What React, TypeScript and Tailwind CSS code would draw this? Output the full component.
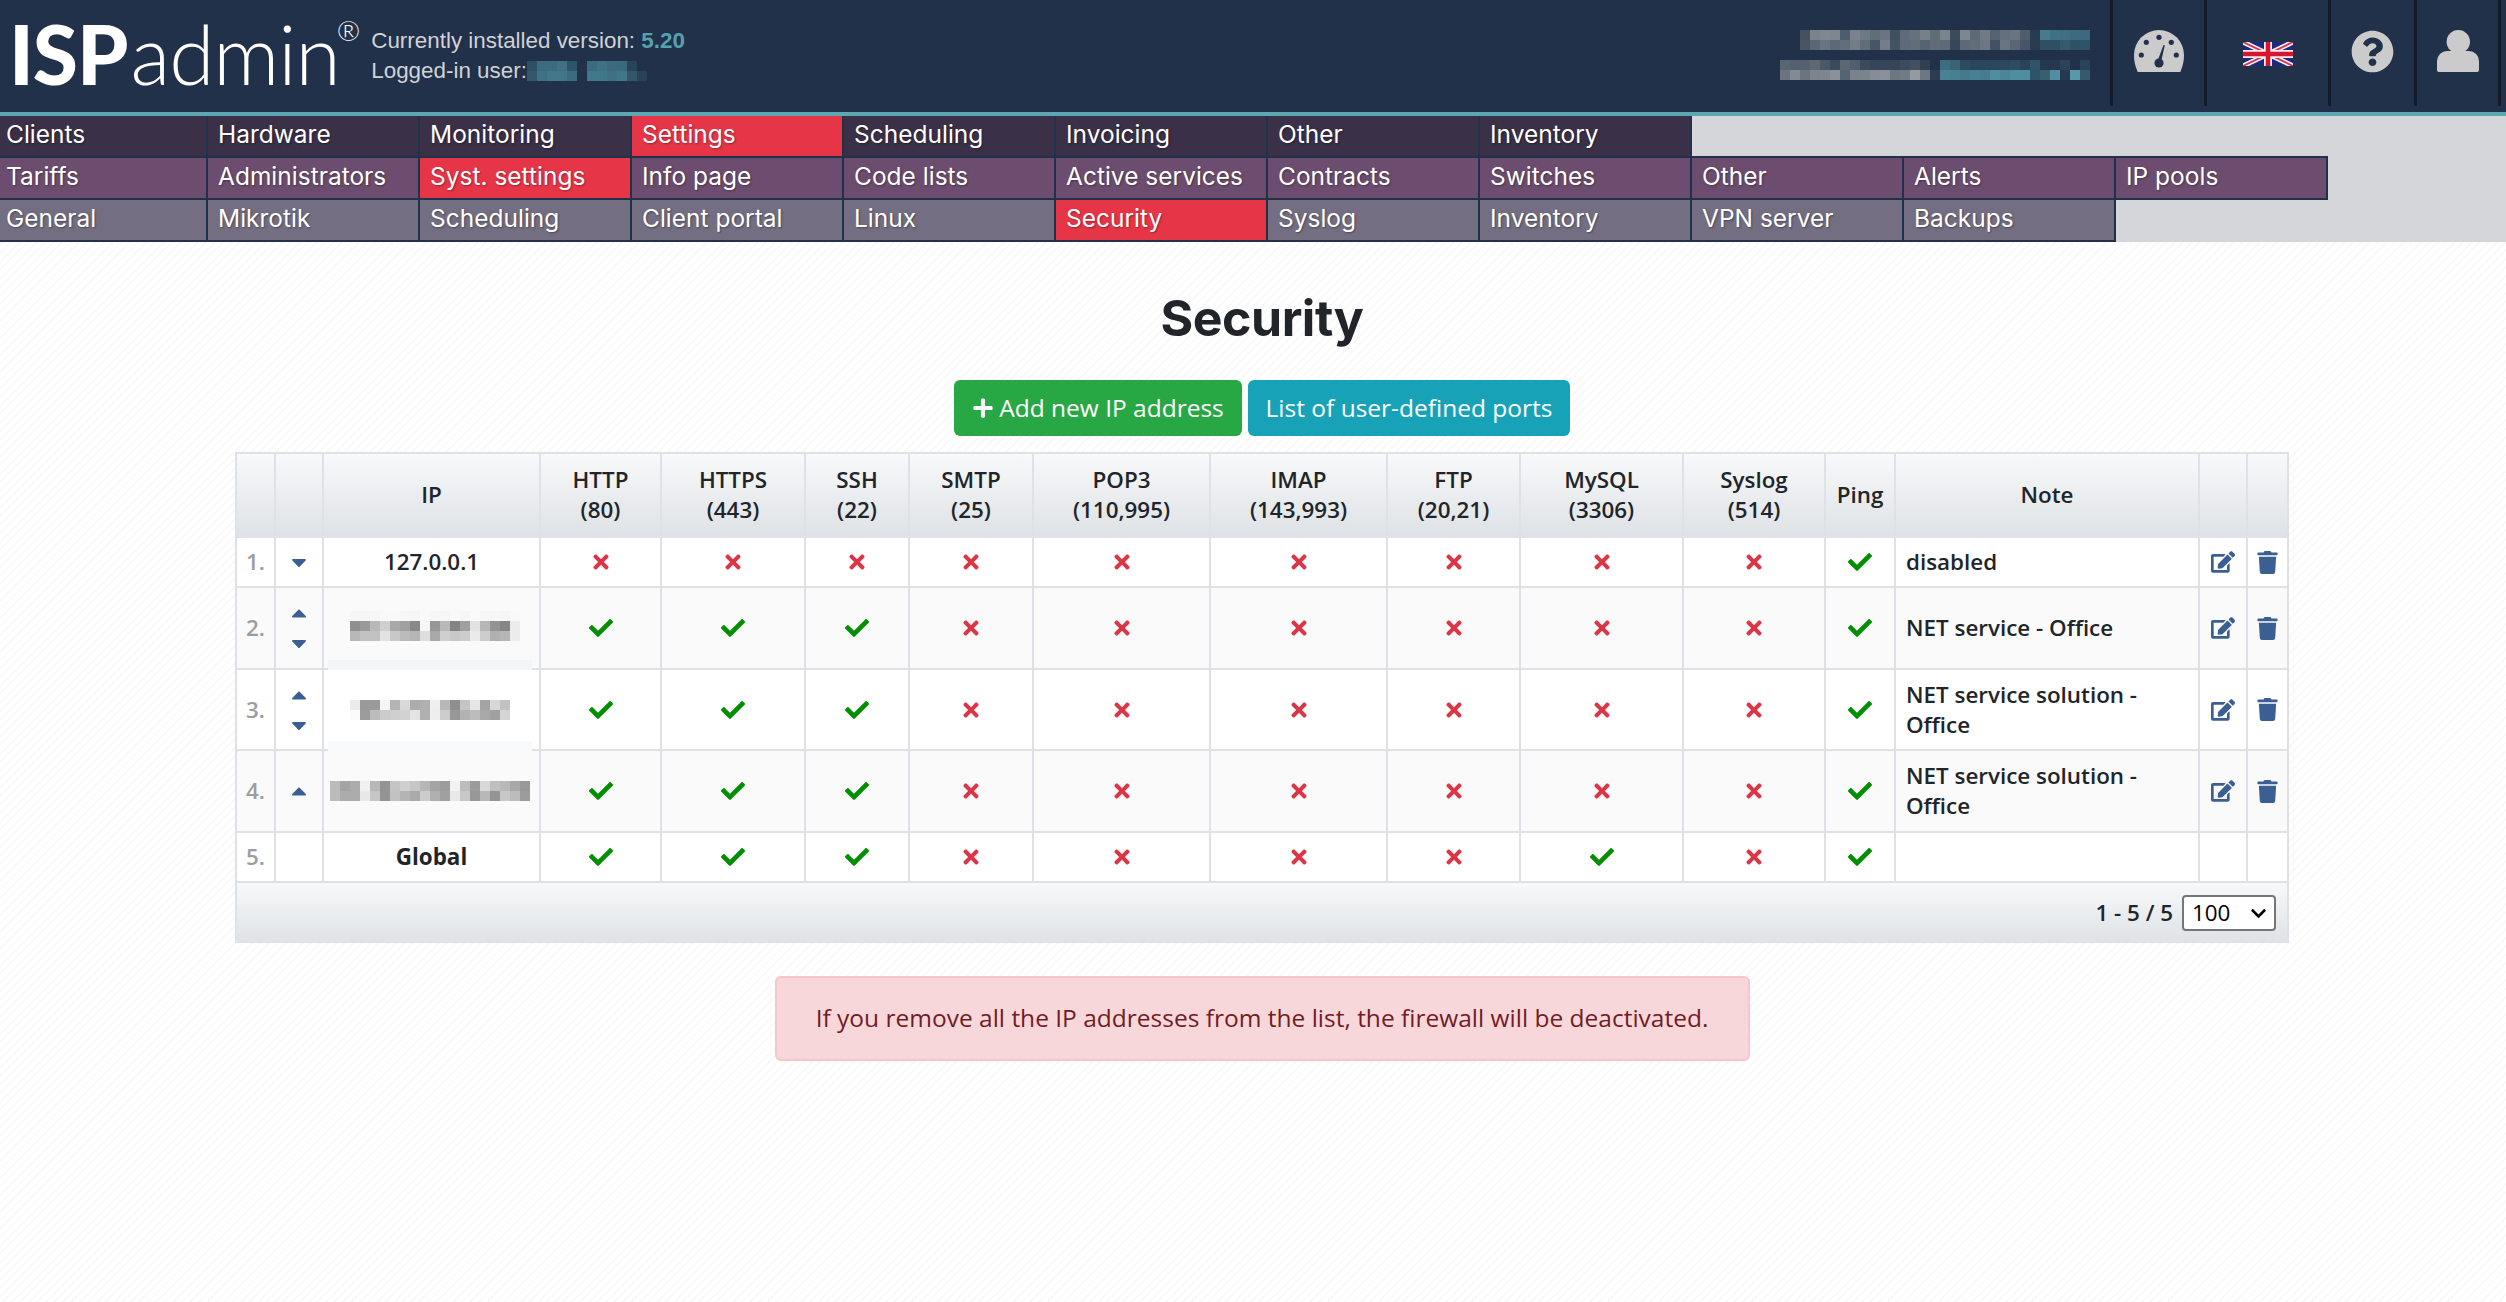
import { FaCaretDown, FaCaretUp, FaCheck, FaChevronDown, FaEdit, FaPlus, FaQuestionCircle, FaTimes, FaTrash } from "react-icons/fa";

const menuRows = [
  { bg: "bg-[#3a3048]", extra: "", active: "Settings", items: ["Clients", "Hardware", "Monitoring", "Settings", "Scheduling", "Invoicing", "Other", "Inventory"] },
  { bg: "bg-[#6c4d6f]", extra: "border-y-2", active: "Syst. settings", items: ["Tariffs", "Administrators", "Syst. settings", "Info page", "Code lists", "Active services", "Contracts", "Switches", "Other", "Alerts", "IP pools"] },
  { bg: "bg-[#736e81]", extra: "border-b-2", active: "Security", items: ["General", "Mikrotik", "Scheduling", "Client portal", "Linux", "Security", "Syslog", "Inventory", "VPN server", "Backups"] },
];

const columns = [39, 48, 217, 121, 144, 104, 124, 177, 177, 133, 163, 142, 70, 304, 48, 41];

const rows = [
  { n: 1, up: false, down: true, ip: "127.0.0.1", h: "h-[50px]", bg: "bg-white", flags: [0, 0, 0, 0, 0, 0, 0, 0, 0, 1], note: "disabled", actions: true },
  { n: 2, up: true, down: true, mosaic: 0, mosaicClass: "-mt-1 pl-[7px]", h: "h-[82px]", bg: "bg-[#fafafa]", flags: [1, 1, 1, 0, 0, 0, 0, 0, 0, 1], note: "NET service - Office", actions: true },
  { n: 3, up: true, down: true, mosaic: 1, mosaicClass: "pr-[3px]", h: "h-[81px]", bg: "bg-white", flags: [1, 1, 1, 0, 0, 0, 0, 0, 0, 1], note: "NET service solution - Office", actions: true },
  { n: 4, up: true, down: false, mosaic: 2, mosaicClass: "pr-[3px]", h: "h-[82px]", bg: "bg-[#fafafa]", flags: [1, 1, 1, 0, 0, 0, 0, 0, 0, 1], note: "NET service solution - Office", actions: true },
  { n: 5, up: false, down: false, ip: "Global", bold: true, h: "h-[50px]", bg: "bg-white", flags: [1, 1, 1, 0, 0, 0, 0, 1, 0, 1], note: "", actions: false },
];

const headers = [[""], [""], ["IP"], ["HTTP", "(80)"], ["HTTPS", "(443)"], ["SSH", "(22)"], ["SMTP", "(25)"], ["POP3", "(110,995)"], ["IMAP", "(143,993)"], ["FTP", "(20,21)"], ["MySQL", "(3306)"], ["Syslog", "(514)"], ["Ping"], ["Note"], [""], [""]];

// pixelated parts of the screenshot, one hex colour per cell
const ipMosaics = [
  [
    "f6f6f6 f6f6f6 f7f7f7 f9f9f9 f9f9f9 f7f7f7 f6f6f6 fafafa f7f7f7 f6f6f6 f9f9f9 f6f6f6 fafafa f7f7f7 f7f7f7 f6f6f6 f9f9f9",
    "8f8f8f 999999 b8b8b8 cfcfcf a8a8a8 a0a0a0 888888 f6f6f6 979797 b8b8b8 838383 9f9f9f e2e2e2 b6b6b6 939393 858585 ececec",
    "b8b8b8 c2c2c2 c2c2c2 e3e3e3 c8c8c8 bbbbbb b6b6b6 dedede a8a8a8 cfcfcf c8c8c8 cdcdcd eaeaea cccccc b0b0b0 b6b6b6 ececec",
  ],
  [
    "ececec 9a9a9a 9a9a9a f5f5f5 b4b4b4 d8d8d8 acacac b0b0b0 efefef b8b8b8 8e8e8e c4c4c4 e6e6e6 a4a4a4 d8d8d8 c2c2c2",
    "fbfbfb 9c9c9c bcbcbc cccccc cfcfcf d2d2d2 e4e4e4 b0b0b0 eeeeee cccccc 989898 b2b2b2 bcbcbc a8a8a8 a0a0a0 d4d4d4",
  ],
  [
    "bcbcbc a4a4a4 acacac f0f0f0 b8b8b8 949494 c4c4c4 cfcfcf c6c6c6 b6b6b6 a4a4a4 9c9c9c f2f2f2 bcbcbc 9c9c9c d8d8d8 bfbfbf b8b8b8 a8a8a8 989898",
    "bcbcbc acacac acacac e8e8e8 c6c6c6 949494 c2c2c2 b4b4b4 aaaaaa cccccc b0b0b0 a0a0a0 e8e8e8 c8c8c8 989898 b8b8b8 949494 c8c8c8 bcbcbc 9c9c9c",
  ],
];

const userMosaic = [
  "2f4f63 3c6b7f 3c6b7f 3f7084 2f5468 22314a 3c6b7f 3f7084 3c6b7f 3a6a7e 2a4359 22314a 22314a",
  "34566a 3f7084 40788a 40788a 3c6b7f 22314a 40788a 40788a 3f7084 40788a 34566a 2a4359 22314a",
];

const topMosaicA = [
  "44505f 7b838d 7f8790 7f868f 4f5c6d 7a838d 6f7985 626d7a 6a7480 41505f 5f6b7a 67717e 75808b 616c79 7b848e 3c4a5c 7e878f 5f6a77 717b87 566271 666f7c 6a7480 515c6c 2a3b50 467a8c 3f7084 3f6e83 3c6b7f 3b6a7e",
  "4a5564 5c6775 6a7481 5e6977 646e7b 737d88 616c79 475566 747d89 445264 5e6a78 626d7a 566373 626c79 5f6a78 37465a 5e6977 626d79 6d7682 435064 6a7481 5a6675 485467 2b3c52 2f4f63 2f4f63 335a6f 2f5166 2f5468",
];

const topMosaicB = [
  "5a6572 555f6d 56606e 5e6875 4c5869 3b4a5d 5c6775 525e6d 3b4a5d 36465a 36465a 36465a 3d4b5e 434f61 2f3f54 22314a 3d6d80 3a6376 2c4a60 2a475d 2a475d 2a475d 2a485e 2c4c62 2a4359 305569 26384f 26384f 2a4359 22314a 2a4359",
  "6b747f 838a93 6b747f 7d848e 7f868f 8b919a 566373 7a828c 7b838d 878d96 8b919a 6d7682 717a85 959aa1 6d7682 2d3c50 4a8294 47808f 447a8d 478093 467c8e 4f8ea0 4b8698 4f8ea0 4f8ea0 2f5468 37606f 4f8fa0 26384f 569aaa 355a6d",
];

function Mosaic({ rows }: { rows: string[] }) {
  const cells = rows.map((r) => r.split(" "));
  const cols = cells[0].length;
  return (
    <svg width={cols * 10} height={rows.length * 10} className="block shrink-0">
      {cells.map((row, y) => row.map((c, x) => <rect key={x + "-" + y} x={x * 10} y={y * 10} width={10.5} height={10.5} fill={"#" + c} />))}
    </svg>
  );
}

function GaugeIcon() {
  return (
    <svg width="50" height="42" viewBox="0 0 50 42">
      <path d="M3.7 42C1.2 36.500 0 31 0 25a25 25 0 0 1 50 0c0 6-1.200 11.500-3.700 17z" fill="#cbcbcb" />
      <g fill="#22314a">
        <circle cx="12.300" cy="12.300" r="2.600" />
        <circle cx="25" cy="7.300" r="2.600" />
        <circle cx="37.300" cy="12.300" r="2.600" />
        <circle cx="7.300" cy="25" r="2.600" />
        <circle cx="42.300" cy="25" r="2.600" />
        <circle cx="25" cy="33" r="4.600" />
        <path d="M23.500 31 29.500 15l1.300.3L27 32z" />
      </g>
    </svg>
  );
}

function FlagIcon() {
  return (
    <svg width="50" height="24" viewBox="0 0 50 24" className="mt-1.5">
      <rect width="50" height="24" fill="#1b2a80" />
      <path d="M0 0 50 24M50 0 0 24" stroke="#f4eef0" strokeWidth="5" />
      <path d="M0 0 50 24M50 0 0 24" stroke="#d9314c" strokeWidth="1.800" />
      <path d="M25 0v24M0 12h50" stroke="#f4eef0" strokeWidth="8" />
      <path d="M25 0v24M0 12h50" stroke="#d8142f" strokeWidth="4.500" />
    </svg>
  );
}

function UserIcon() {
  return (
    <svg width="42" height="42" viewBox="0 0 42 42" fill="#cbcbcb">
      <circle cx="21.300" cy="11.700" r="11.700" />
      <path d="M10 21h22a10 10 0 0 1 10 10v9a2 2 0 0 1-2 2H2a2 2 0 0 1-2-2v-9a10 10 0 0 1 10-10z" />
    </svg>
  );
}

function MenuRow({ bg, extra, active, items }: { bg: string; extra: string; active: string; items: string[] }) {
  return (
    <div className={`flex w-fit -ml-1 border-[#22314a] ${extra}`}>
      {items.map((item) => (
        <div
          key={item}
          className={`w-[212px] h-10 pl-[10px] border-r-2 border-[#22314a] text-white text-[24.500px] leading-[36px] [text-shadow:1px_1px_2px_rgba(0,0,0,0.35)] ${item === active ? "bg-[#e73548]" : bg}`}
        >
          {item}
        </div>
      ))}
    </div>
  );
}

export default function App() {
  return (
    <div className="min-h-screen w-full overflow-hidden bg-[repeating-linear-gradient(135deg,#ffffff_0px,#ffffff_4px,#f9f9f9_4px,#f9f9f9_6px)] font-['Open_Sans',sans-serif] text-[#212529]">
      {/* Header */}
      <header className="flex h-[112px] bg-[#22314a] justify-between pr-[5px]">
        <div className="flex items-start">
          <div className="flex pl-[9px] pt-[5px] text-white font-['Lato',sans-serif] text-[82px] leading-[96px] items-start">
            <span className="font-black tracking-[-1px]">ISP</span>
            <span className="font-light tracking-[-1px] ml-[3px]">admin</span>
            <span className="font-light text-[28px] leading-[30px] mt-[10px] -ml-[3px]">®</span>
          </div>
          <div className="ml-[11px] pt-[26px] font-['Liberation_Sans',sans-serif] text-[22.400px] leading-[30px] text-[#d0d2d6]">
            <div>
              Currently installed version: <span className="font-bold text-[#55a1ad]">5.20</span>
            </div>
            <div className="flex items-center">
              Logged-in user:
              <Mosaic rows={userMosaic} />
            </div>
          </div>
        </div>
        <div className="flex">
          <div className="flex flex-col items-end gap-[10px] pt-[30px] pr-[20px]">
            <Mosaic rows={topMosaicA} />
            <Mosaic rows={topMosaicB} />
          </div>
          <div className="flex h-[106px] border-r-[3px] border-[#141c2b]">
            <div className="w-[94px] border-l-[3px] border-[#141c2b] flex items-center justify-center pb-1"><GaugeIcon /></div>
            <div className="w-[124px] border-l-[3px] border-[#141c2b] flex items-center justify-center pb-1"><FlagIcon /></div>
            <div className="w-[86px] border-l-[3px] border-[#141c2b] flex items-center justify-center pb-1 text-[#cbcbcb]"><FaQuestionCircle size={43} /></div>
            <div className="w-[84px] border-l-[3px] border-[#141c2b] flex items-center justify-center pb-1"><UserIcon /></div>
          </div>
        </div>
      </header>

      {/* Menu */}
      <nav className="bg-[#d5d6da] border-t-4 border-[#5ca7b4] font-['Inter',sans-serif]">
        {menuRows.map((row) => (
          <MenuRow key={row.active} {...row} />
        ))}
      </nav>

      <main className="ml-[236px] w-[2052px] flex flex-col items-center">
        <h1 className="mt-[48px] text-[50px] leading-[56px] font-bold font-['Inter',sans-serif] tracking-[-0.5px]">Security</h1>
        <div className="mt-[34px] flex gap-[6px]">
          <button className="h-14 w-[288px] rounded-md bg-[#28a745] text-white text-[24.500px] flex items-center justify-center gap-[5px]">
            <FaPlus size={22} />
            Add new IP address
          </button>
          <button className="h-14 w-[322px] rounded-md bg-[#17a2b8] text-white text-[24.500px]">List of user-defined ports</button>
        </div>

        <table className="mt-4 w-[2052px] table-fixed border-collapse text-[22.400px] leading-[30px] font-semibold">
          <colgroup>
            {columns.map((w, i) => (
              <col key={i} style={{ width: w }} />
            ))}
          </colgroup>
          <thead>
            <tr className="h-[84px] bg-gradient-to-b from-[#f8f9fa] to-[#dee2e6]">
              {headers.map((h, i) => (
                <th key={i} className="border-2 border-b-0 border-[#dee2e6] font-semibold text-center">
                  {h.map((line) => (
                    <div key={line}>{line}</div>
                  ))}
                </th>
              ))}
            </tr>
          </thead>
          <tbody>
            {rows.map((row) => (
              <tr key={row.n} className={`${row.h} ${row.bg}`}>
                <td className="border-2 border-[#dee2e6] text-center text-[#9a9da1]">{row.n}.</td>
                <td className="border-2 border-[#dee2e6] text-[#3b5f92]">
                  <div className="flex flex-col items-center gap-[6px]">
                    {row.up && <FaCaretUp size={24} />}
                    {row.down && <FaCaretDown size={24} />}
                  </div>
                </td>
                <td className={`relative border-2 border-[#dee2e6] text-center ${row.bold ? "font-bold" : ""}`}>
                  {row.ip}
                  {row.mosaic !== undefined && (
                    <div className={`flex justify-center ${row.mosaicClass}`}>
                      <Mosaic rows={ipMosaics[row.mosaic]} />
                    </div>
                  )}
                  {row.n === 2 && <div className="absolute left-[4px] right-[7px] -bottom-[2px] h-[10px] bg-[#f4f5f8]" />}
                  {row.n === 3 && <div className="absolute left-[4px] right-[7px] -bottom-[2px] h-[10px] bg-[#f8f9fb]" />}
                </td>
                {row.flags.map((f, i) => (
                  <td key={i} className="border-2 border-[#dee2e6]">
                    <div className="flex justify-center">
                      {f ? <FaCheck size={24} className="text-[#008f00]" /> : <FaTimes size={22} className="text-[#dc3545]" />}
                    </div>
                  </td>
                ))}
                <td className="border-2 border-[#dee2e6] px-[10px]">{row.note}</td>
                <td className="border-2 border-[#dee2e6] text-[#3b5f92]">
                  {row.actions && (
                    <div className="flex justify-center">
                      <FaEdit size={24} />
                    </div>
                  )}
                </td>
                <td className="border-2 border-[#dee2e6] text-[#3b5f92]">
                  {row.actions && (
                    <div className="flex justify-center">
                      <FaTrash size={23} />
                    </div>
                  )}
                </td>
              </tr>
            ))}
          </tbody>
          <tfoot>
            <tr className="h-[61px] bg-gradient-to-b from-[#f8f9fa] to-[#dee2e6]">
              <td colSpan={16} className="border-x-2 border-[#dee2e6] pr-[11px]">
                <div className="flex items-center justify-end gap-[9px]">
                  1 - 5 / 5
                  <div className="relative">
                    <select defaultValue="100" className="block h-9 w-[94px] appearance-none rounded border-2 border-[#767676] bg-white pl-2 font-normal text-black">
                      <option>100</option>
                    </select>
                    <FaChevronDown size={17} className="absolute right-[9px] top-[10px] text-black pointer-events-none" />
                  </div>
                </div>
              </td>
            </tr>
          </tfoot>
        </table>

        <div className="mt-[33px] h-[85px] w-[975px] rounded-md border-2 border-[#f5c6cb] bg-[#f8d7da] text-[#721c24] text-[24.500px] flex items-center justify-center">
          If you remove all the IP addresses from the list, the firewall will be deactivated.
        </div>
      </main>
    </div>
  );
}
